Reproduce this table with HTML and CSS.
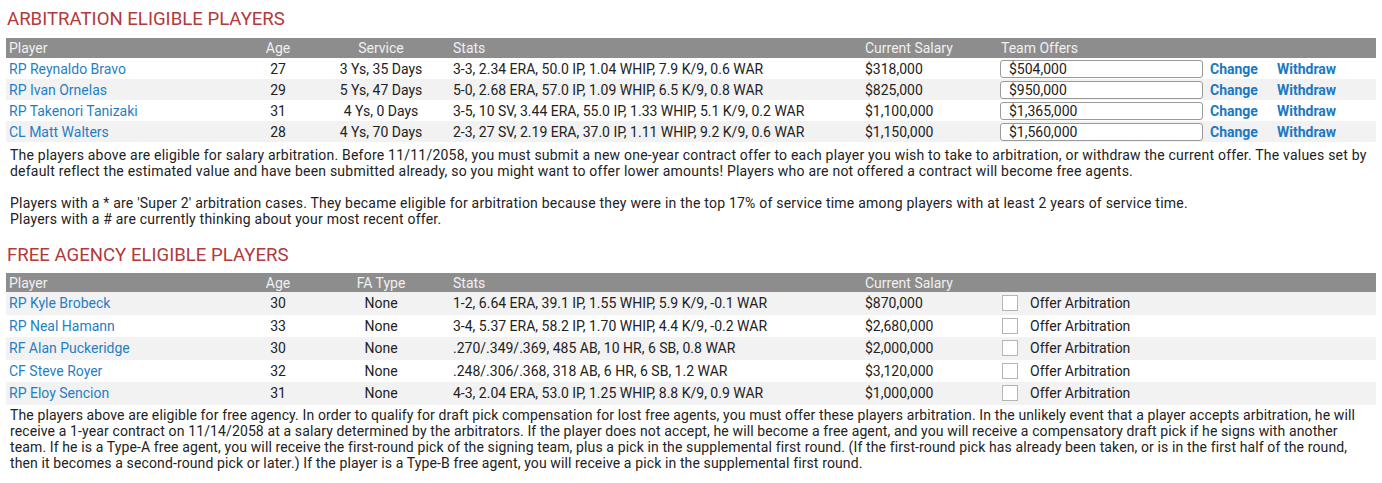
FILE: index.html
```html
<!DOCTYPE html>
<html>
<head>
<meta charset="utf-8">
<link rel="stylesheet" href="styles.css">
</head>
<body>
<div class="page">
  <h2 class="title">ARBITRATION ELIGIBLE PLAYERS</h2>
  <table class="grid arb">
    <colgroup>
      <col class="c-player"><col class="c-age"><col class="c-svc"><col class="c-stats"><col class="c-sal"><col class="c-offer"><col class="c-change"><col class="c-withdraw">
    </colgroup>
    <thead>
      <tr><th>Player</th><th class="ctr">Age</th><th class="ctr">Service</th><th>Stats</th><th>Current Salary</th><th>Team Offers</th><th></th><th></th></tr>
    </thead>
    <tbody>
      <tr><td><a href="#">RP Reynaldo Bravo</a></td><td class="ctr">27</td><td class="ctr">3 Ys, 35 Days</td><td>3-3, 2.34 ERA, 50.0 IP, 1.04 WHIP, 7.9 K/9, 0.6 WAR</td><td>$318,000</td><td><input class="offer" type="text" value="$504,000"></td><td><a class="act" href="#">Change</a></td><td><a class="act" href="#">Withdraw</a></td></tr>
      <tr><td><a href="#">RP Ivan Ornelas</a></td><td class="ctr">29</td><td class="ctr">5 Ys, 47 Days</td><td>5-0, 2.68 ERA, 57.0 IP, 1.09 WHIP, 6.5 K/9, 0.8 WAR</td><td>$825,000</td><td><input class="offer" type="text" value="$950,000"></td><td><a class="act" href="#">Change</a></td><td><a class="act" href="#">Withdraw</a></td></tr>
      <tr><td><a href="#">RP Takenori Tanizaki</a></td><td class="ctr">31</td><td class="ctr">4 Ys, 0 Days</td><td>3-5, 10 SV, 3.44 ERA, 55.0 IP, 1.33 WHIP, 5.1 K/9, 0.2 WAR</td><td>$1,100,000</td><td><input class="offer" type="text" value="$1,365,000"></td><td><a class="act" href="#">Change</a></td><td><a class="act" href="#">Withdraw</a></td></tr>
      <tr><td><a href="#">CL Matt Walters</a></td><td class="ctr">28</td><td class="ctr">4 Ys, 70 Days</td><td>2-3, 27 SV, 2.19 ERA, 37.0 IP, 1.11 WHIP, 9.2 K/9, 0.6 WAR</td><td>$1,150,000</td><td><input class="offer" type="text" value="$1,560,000"></td><td><a class="act" href="#">Change</a></td><td><a class="act" href="#">Withdraw</a></td></tr>
    </tbody>
  </table>
  <div class="note note-arb">
    <p>The players above are eligible for salary arbitration. Before 11/11/2058, you must submit a new one-year contract offer to each player you wish to take to arbitration, or withdraw the current offer. The values set by default reflect the estimated value and have been submitted already, so you might want to offer lower amounts! Players who are not offered a contract will become free agents.</p>
    <p>Players with a * are 'Super 2' arbitration cases. They became eligible for arbitration because they were in the top 17% of service time among players with at least 2 years of service time.<br>Players with a # are currently thinking about your most recent offer.</p>
  </div>

  <h2 class="title">FREE AGENCY ELIGIBLE PLAYERS</h2>
  <table class="grid fa">
    <colgroup>
      <col class="c-player"><col class="c-age"><col class="c-svc"><col class="c-stats"><col class="c-sal"><col class="c-rest">
    </colgroup>
    <thead>
      <tr><th>Player</th><th class="ctr">Age</th><th class="ctr">FA Type</th><th>Stats</th><th>Current Salary</th><th></th></tr>
    </thead>
    <tbody>
      <tr><td><a href="#">RP Kyle Brobeck</a></td><td class="ctr">30</td><td class="ctr">None</td><td>1-2, 6.64 ERA, 39.1 IP, 1.55 WHIP, 5.9 K/9, -0.1 WAR</td><td>$870,000</td><td><label class="chk"><span class="box"></span>Offer Arbitration</label></td></tr>
      <tr><td><a href="#">RP Neal Hamann</a></td><td class="ctr">33</td><td class="ctr">None</td><td>3-4, 5.37 ERA, 58.2 IP, 1.70 WHIP, 4.4 K/9, -0.2 WAR</td><td>$2,680,000</td><td><label class="chk"><span class="box"></span>Offer Arbitration</label></td></tr>
      <tr><td><a href="#">RF Alan Puckeridge</a></td><td class="ctr">30</td><td class="ctr">None</td><td>.270/.349/.369, 485 AB, 10 HR, 6 SB, 0.8 WAR</td><td>$2,000,000</td><td><label class="chk"><span class="box"></span>Offer Arbitration</label></td></tr>
      <tr><td><a href="#">CF Steve Royer</a></td><td class="ctr">32</td><td class="ctr">None</td><td>.248/.306/.368, 318 AB, 6 HR, 6 SB, 1.2 WAR</td><td>$3,120,000</td><td><label class="chk"><span class="box"></span>Offer Arbitration</label></td></tr>
      <tr><td><a href="#">RP Eloy Sencion</a></td><td class="ctr">31</td><td class="ctr">None</td><td>4-3, 2.04 ERA, 53.0 IP, 1.25 WHIP, 8.8 K/9, 0.9 WAR</td><td>$1,000,000</td><td><label class="chk"><span class="box"></span>Offer Arbitration</label></td></tr>
    </tbody>
  </table>
  <div class="note note-fa">
    <p>The players above are eligible for free agency. In order to qualify for draft pick compensation for lost free agents, you must offer these players arbitration. In the unlikely event that a player accepts arbitration, he will receive a 1-year contract on 11/14/2058 at a salary determined by the arbitrators. If the player does not accept, he will become a free agent, and you will receive a compensatory draft pick if he signs with another team. If he is a Type-A free agent, you will receive the first-round pick of the signing team, plus a pick in the supplemental first round. (If the first-round pick has already been taken, or is in the first half of the round, then it becomes a second-round pick or later.) If the player is a Type-B free agent, you will receive a pick in the supplemental first round.</p>
  </div>
</div>
</body>
</html>
```

FILE: styles.css
```css
* { box-sizing: border-box; }
html, body { margin: 0; padding: 0; background: #fff; }
body {
  font-family: Roboto, "Noto Sans", sans-serif;
  font-size: 14px;
  color: #222;
}
.page { padding: 8px 6px 0 6px; }
.title {
  margin: 0 0 8px 1px;
  font-size: 18.6px;
  font-weight: 400;
  color: #b3393b;
  line-height: 22px;
}
.grid {
  width: 1370px;
  border-collapse: collapse;
  table-layout: fixed;
}
.c-player { width: 238px; }
.c-age { width: 68px; }
.c-svc { width: 138px; }
.c-stats { width: 412px; }
.c-sal { width: 136px; }
.c-offer { width: 209px; }
.c-change { width: 67px; }
.c-withdraw { width: 102px; }
.grid th {
  background: #8d8d8d;
  color: #f0f0f0;
  font-weight: 400;
  text-align: left;
  padding: 0 3px;
  line-height: 16px;
}
.arb th { height: 20px; }
.fa th { height: 19px; }
.grid td {
  padding: 0 3px;
  height: 21px;
  line-height: 16px;
  white-space: nowrap;
}
.fa td { height: 22.5px; }
.grid tbody tr:nth-child(even) td { background: #f2f2f2; }
.fa tbody tr:nth-child(even) td { background: #fff; }
.fa tbody tr:nth-child(odd) td { background: #f2f2f2; }
.grid .ctr { text-align: center; }
.grid a { color: #1f7fc4; text-decoration: none; }
.grid a.act { font-weight: 700; color: #1b78c2; }
.offer {
  display: block;
  width: 203px;
  height: 18px;
  margin: 0 0 0 -1px;
  padding: 0 0 0 8px;
  border: 1px solid #9a9a9a;
  border-radius: 3px;
  font-family: Roboto, "Noto Sans", sans-serif;
  font-size: 14px;
  color: #222;
  background: #fff;
}
.chk { display: flex; align-items: center; gap: 12px; }
.box {
  width: 16px;
  height: 16px;
  margin-left: 1px;
  border: 1px solid #b5b5b5;
  background: #fff;
}
.note { padding: 5px 0 0 4px; line-height: 16px; }
.note p { margin: 0 0 16px 0; }
.note-arb { margin-bottom: 17px; letter-spacing: 0.22px; }
.note-arb p:last-child { margin-bottom: 0; }
.note-fa { padding-top: 2px; letter-spacing: 0.12px; }
.note-fa p { margin: 0; }
.note-arb + .title { margin-bottom: 7px; }
```
